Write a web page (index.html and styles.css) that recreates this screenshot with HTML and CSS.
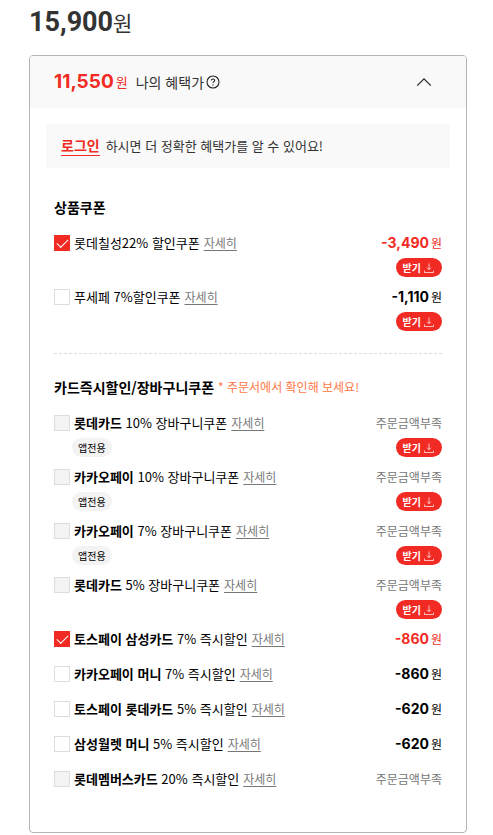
FILE: index.html
```html
<!DOCTYPE html>
<html lang="ko">
<head>
  <meta charset="UTF-8">
  <meta name="viewport" content="width=device-width, initial-scale=1.0">
  <title>나의 혜택가</title>
  <link rel="stylesheet" href="styles.css">
</head>
<body>
<svg class="sprite" aria-hidden="true">
  <symbol id="icon-download" viewBox="0 0 12 12">
    <path d="M6 1.5v6.2M4 5.7L6 7.7l2-2M1.5 8.5v2h9v-2" fill="none" stroke="currentColor" stroke-width="0.7"/>
  </symbol>
</svg>
<main class="product">
  <p class="sale-price"><strong>15,900</strong><span>원</span></p>

  <section class="benefit">
    <header class="benefit-head">
      <p class="benefit-price"><strong>11,550</strong><span>원</span></p>
      <h2>나의 혜택가</h2>
      <button type="button" class="help" aria-label="혜택가 안내">
        <svg viewBox="0 0 14 14" width="14" height="14" fill="none" stroke="currentColor">
          <circle cx="7" cy="7" r="6" stroke-width="1.1"/>
          <path d="M5.3 5.6c0-2.2 3.4-2.2 3.4-.1 0 1.2-1.7 1.2-1.7 2.6M7 9.3v1.2" stroke-width="1.1"/>
        </svg>
      </button>
      <button type="button" class="toggle" aria-label="접기">
        <svg viewBox="0 0 16 10" width="16" height="10" fill="none" stroke="currentColor">
          <path d="M1.2 8.6L8 1.8l6.8 6.8" stroke-width="1.2"/>
        </svg>
      </button>
    </header>

    <p class="login-notice"><a href="#">로그인</a>하시면 더 정확한 혜택가를 알 수 있어요!</p>

    <div class="coupon-group">
      <h3>상품쿠폰</h3>
      <ul>
        <li class="has-button">
          <input type="checkbox" id="c1" checked>
          <div class="info"><label for="c1">롯데칠성22% 할인쿠폰</label><a href="#">자세히</a></div>
          <div class="side">
            <p class="amount red"><strong>-3,490</strong>원</p>
            <button type="button" class="get">받기<svg><use href="#icon-download"/></svg></button>
          </div>
        </li>
        <li class="has-button">
          <input type="checkbox" id="c2">
          <div class="info"><label for="c2">푸세페 7%할인쿠폰</label><a href="#">자세히</a></div>
          <div class="side">
            <p class="amount"><strong>-1,110</strong>원</p>
            <button type="button" class="get">받기<svg><use href="#icon-download"/></svg></button>
          </div>
        </li>
      </ul>
    </div>

    <div class="coupon-group">
      <h3>카드즉시할인/장바구니쿠폰 <em>* 주문서에서 확인해 보세요!</em></h3>
      <ul>
        <li class="has-button">
          <input type="checkbox" id="c3" disabled>
          <div class="info"><label for="c3"><b>롯데카드</b> 10% 장바구니쿠폰</label><a href="#">자세히</a><span class="app-only">앱전용</span></div>
          <div class="side">
            <p class="short">주문금액부족</p>
            <button type="button" class="get">받기<svg><use href="#icon-download"/></svg></button>
          </div>
        </li>
        <li class="has-button">
          <input type="checkbox" id="c4" disabled>
          <div class="info"><label for="c4"><b>카카오페이</b> 10% 장바구니쿠폰</label><a href="#">자세히</a><span class="app-only">앱전용</span></div>
          <div class="side">
            <p class="short">주문금액부족</p>
            <button type="button" class="get">받기<svg><use href="#icon-download"/></svg></button>
          </div>
        </li>
        <li class="has-button">
          <input type="checkbox" id="c5" disabled>
          <div class="info"><label for="c5"><b>카카오페이</b> 7% 장바구니쿠폰</label><a href="#">자세히</a><span class="app-only">앱전용</span></div>
          <div class="side">
            <p class="short">주문금액부족</p>
            <button type="button" class="get">받기<svg><use href="#icon-download"/></svg></button>
          </div>
        </li>
        <li class="has-button">
          <input type="checkbox" id="c6" disabled>
          <div class="info"><label for="c6"><b>롯데카드</b> 5% 장바구니쿠폰</label><a href="#">자세히</a></div>
          <div class="side">
            <p class="short">주문금액부족</p>
            <button type="button" class="get">받기<svg><use href="#icon-download"/></svg></button>
          </div>
        </li>
        <li>
          <input type="checkbox" id="c7" checked>
          <div class="info"><label for="c7"><b>토스페이 삼성카드</b> 7% 즉시할인</label><a href="#">자세히</a></div>
          <div class="side"><p class="amount red"><strong>-860</strong>원</p></div>
        </li>
        <li>
          <input type="checkbox" id="c8">
          <div class="info"><label for="c8"><b>카카오페이 머니</b> 7% 즉시할인</label><a href="#">자세히</a></div>
          <div class="side"><p class="amount"><strong>-860</strong>원</p></div>
        </li>
        <li>
          <input type="checkbox" id="c9">
          <div class="info"><label for="c9"><b>토스페이 롯데카드</b> 5% 즉시할인</label><a href="#">자세히</a></div>
          <div class="side"><p class="amount"><strong>-620</strong>원</p></div>
        </li>
        <li>
          <input type="checkbox" id="c10">
          <div class="info"><label for="c10"><b>삼성월렛 머니</b> 5% 즉시할인</label><a href="#">자세히</a></div>
          <div class="side"><p class="amount"><strong>-620</strong>원</p></div>
        </li>
        <li>
          <input type="checkbox" id="c11" disabled>
          <div class="info"><label for="c11"><b>롯데멤버스카드</b> 20% 즉시할인</label><a href="#">자세히</a></div>
          <div class="side"><p class="short">주문금액부족</p></div>
        </li>
      </ul>
    </div>
  </section>
</main>
</body>
</html>
```

FILE: styles.css
```css
* {
  margin: 0;
  padding: 0;
  box-sizing: border-box;
}

body {
  background: #fff;
  color: #000;
  font-family: "Noto Sans CJK KR", sans-serif;
  font-size: 13px;
  line-height: 20px;
}

ul {
  list-style: none;
}

button {
  border: none;
  background: none;
  font-family: inherit;
  color: inherit;
  cursor: pointer;
}

.sprite {
  display: none;
}

.product {
  padding: 6px 26px 0 29px;
}

.sale-price {
  display: flex;
  align-items: center;
  height: 32px;
  margin-bottom: 17px;
  color: #333;
  font-size: 21px;
}

.sale-price strong {
  font-family: Roboto, sans-serif;
  font-size: 27px;
}

.benefit {
  border: 1px solid #b5b5b5;
  border-radius: 4px;
  padding-bottom: 43px;
}

.benefit-head {
  display: flex;
  align-items: center;
  height: 52px;
  padding: 0 32px 0 24px;
  border-radius: 3px 3px 0 0;
  background: #f9f9f9;
  color: #333;
}

.benefit-head h2 {
  margin-left: 8px;
  font-size: 14px;
  font-weight: 400;
}

.benefit-price {
  display: flex;
  align-items: center;
  gap: 2px;
  color: #f12b24;
}

.benefit-price strong,
.amount strong {
  font-family: Inter, sans-serif;
  font-weight: 700;
}

.benefit-price strong {
  font-size: 19px;
}

.help,
.toggle {
  display: flex;
  color: #222;
}

.help {
  margin-left: 2px;
}

.toggle {
  padding: 2px;
  margin-left: auto;
}

.login-notice {
  margin: 16px;
  padding: 12px 15px;
  background: #f9f9f9;
  color: #333;
}

.login-notice a {
  display: inline-block;
  margin-right: 6px;
  border-bottom: 1px solid #f12b24;
  color: #f12b24;
  font-size: 14px;
  font-weight: 700;
  line-height: 19px;
  text-decoration: none;
}

.coupon-group {
  margin: 0 24px;
  padding-top: 13px;
}

.coupon-group + .coupon-group {
  margin-top: 22px;
  padding-top: 23px;
  border-top: 1px dashed #ddd;
}

.coupon-group h3 {
  display: flex;
  gap: 4px;
  margin-bottom: 16px;
  font-size: 14px;
  font-weight: 700;
}

.coupon-group h3 em {
  color: #ff7746;
  font-size: 12px;
  font-style: normal;
  font-weight: 400;
}

.coupon-group li {
  display: flex;
  align-items: flex-start;
  margin-bottom: 15px;
}

.coupon-group li.has-button {
  margin-bottom: 10px;
}

.coupon-group li:last-child {
  margin-bottom: 0;
}

input[type="checkbox"] {
  appearance: none;
  flex: none;
  width: 16px;
  height: 16px;
  margin-top: 2px;
  border: 1px solid #ddd;
  background: #fff;
}

input[type="checkbox"]:disabled {
  background: #f3f3f3;
}

input[type="checkbox"]:checked {
  display: grid;
  place-items: center;
  border-color: #f12b24;
  background: #f12b24;
}

input[type="checkbox"]:checked::before {
  content: "";
  width: 10px;
  height: 5px;
  margin-bottom: 3px;
  border: solid #fff;
  border-width: 0 0 1px 1px;
  transform: rotate(-45deg);
}

.info {
  display: flex;
  flex-wrap: wrap;
  flex: 1;
  gap: 5px 4px;
  padding-left: 4px;
}

.info a {
  color: #777;
  font-size: 12px;
  text-underline-offset: 2px;
}

.app-only {
  margin: 0 100% 0 -2px;
  padding: 0 6px;
  border-radius: 10px;
  background: #f3f3f3;
  font-size: 10px;
  line-height: 19px;
  white-space: nowrap;
}

.side {
  display: flex;
  flex-direction: column;
  align-items: flex-end;
  gap: 5px;
}

.amount {
  display: flex;
  align-items: center;
  gap: 2px;
  font-size: 12px;
}

.amount strong {
  font-size: 14px;
}

.red {
  color: #f12b24;
}

.short {
  color: #777;
  font-size: 12px;
}

.get {
  display: flex;
  align-items: center;
  gap: 2px;
  height: 19px;
  padding: 0 7px;
  border-radius: 10px;
  background: #f12b24;
  color: #fff;
  font-size: 10px;
  font-weight: 700;
}

.get svg {
  width: 12px;
  height: 12px;
}
```
